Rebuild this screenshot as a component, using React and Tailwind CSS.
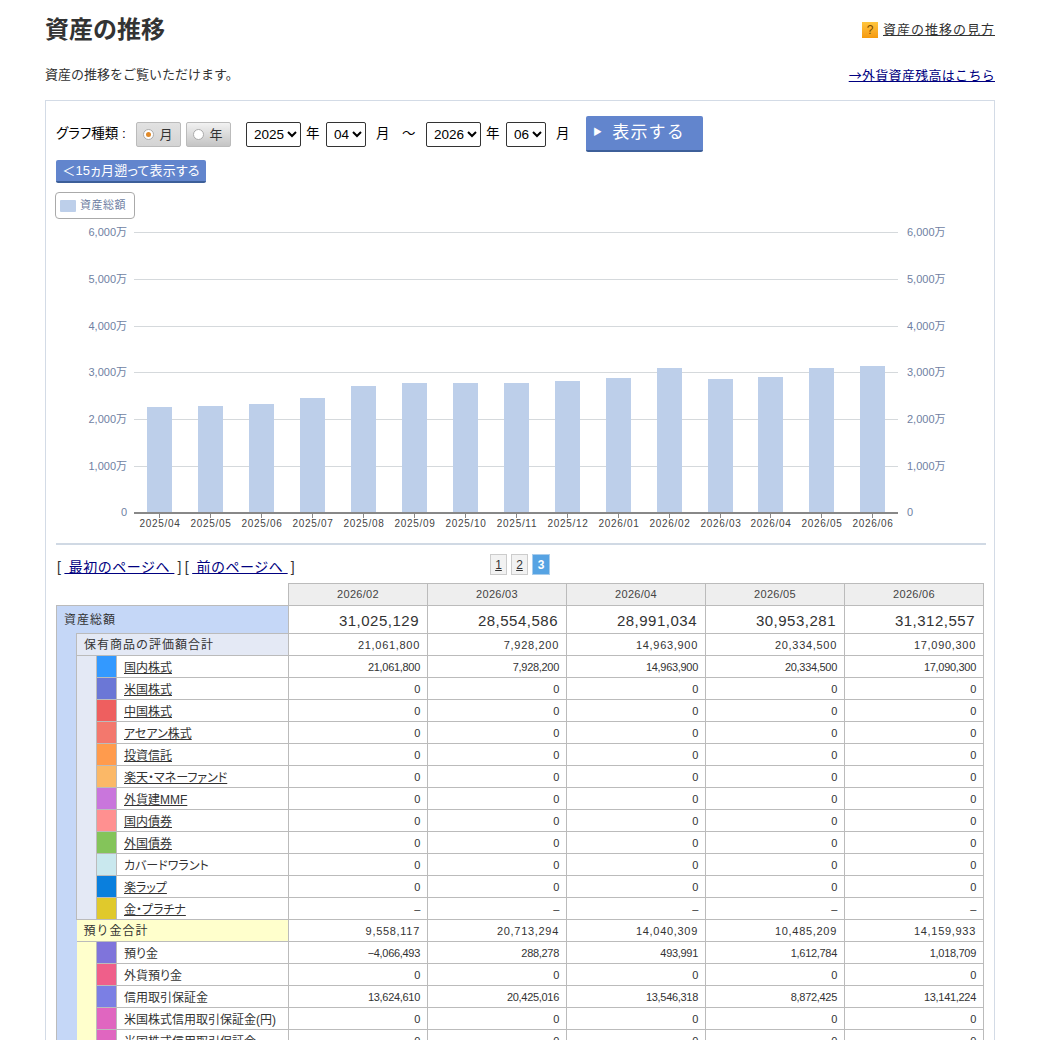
const bars = [
  ['2025/04', 407], ['2025/05', 406], ['2025/06', 404], ['2025/07', 398], ['2025/08', 386],
  ['2025/09', 383], ['2025/10', 383], ['2025/11', 383], ['2025/12', 381], ['2026/01', 378],
  ['2026/02', 368], ['2026/03', 379], ['2026/04', 377], ['2026/05', 368], ['2026/06', 366],
];
const barX = [147, 198, 249, 300, 351, 402, 453, 504, 555, 606, 657, 708, 758, 809, 860];
const grid = [
  ['6,000万', 232], ['5,000万', 279], ['4,000万', 326], ['3,000万', 372],
  ['2,000万', 419], ['1,000万', 466], ['0', 512],
];

const Chart = () => (
  // svg origin is page x=56, y=224
  <svg width="928" height="310" viewBox="56 224 928 310" className="block">
    {grid.slice(0, 6).map(([, y]) => (
      <line key={y} x1="134" x2="898" y1={y + 0.5} y2={y + 0.5} stroke="#d5d9dc" />
    ))}
    {grid.map(([label, y]) => (
      <g key={label} fontSize="11" fill="#6f7fa3" fontFamily="Liberation Sans, Noto Sans CJK JP, sans-serif">
        <text x="127" y={y + 4} textAnchor="end">{label}</text>
        <text x="907" y={y + 4}>{label}</text>
      </g>
    ))}
    {bars.map(([label, top], i) => (
      <g key={label}>
        <rect x={barX[i]} y={top} width="25" height={513 - top} fill="#bdcfea" />
        <line x1={barX[i] + 12.5} x2={barX[i] + 12.5} y1="513" y2="518" stroke="#888888" />
        <text x={barX[i] + 13} y="527" textAnchor="middle" fontSize="10" letterSpacing="0.7" fill="#444444" fontFamily="Liberation Sans, sans-serif">{label}</text>
      </g>
    ))}
    <rect x="134" y="512" width="764" height="2" fill="#888888" />
  </svg>
);

const months = ['2026/02', '2026/03', '2026/04', '2026/05', '2026/06'];

const total = ['31,025,129', '28,554,586', '28,991,034', '30,953,281', '31,312,557'];
const heldTotal = ['21,061,800', '7,928,200', '14,963,900', '20,334,500', '17,090,300'];
const cashTotal = ['9,558,117', '20,713,294', '14,040,309', '10,485,209', '14,159,933'];
const zeros = ['0', '0', '0', '0', '0'];

const held = [
  ['国内株式', '#3399ff', true, heldTotal],
  ['米国株式', '#6b77d6', true, zeros],
  ['中国株式', '#ee5f5f', true, zeros],
  ['アセアン株式', '#f3786d', true, zeros],
  ['投資信託', '#ff9b4d', true, zeros],
  ['楽天・マネーファンド', '#fbb867', true, zeros],
  ['外貨建MMF', '#c976dc', true, zeros],
  ['国内債券', '#ff9090', true, zeros],
  ['外国債券', '#84c45a', true, zeros],
  ['カバードワラント', '#c9e8ee', false, zeros],
  ['楽ラップ', '#0a7fdd', true, zeros],
  ['金・プラチナ', '#e0c92c', true, ['–', '–', '–', '–', '–']],
];

const cash = [
  ['預り金', '#7f74db', ['−4,066,493', '288,278', '493,991', '1,612,784', '1,018,709']],
  ['外貨預り金', '#ef5f8a', zeros],
  ['信用取引保証金', '#7b7fe4', ['13,624,610', '20,425,016', '13,546,318', '8,872,425', '13,141,224']],
  ['米国株式信用取引保証金(円)', '#e066c0', zeros],
  ['米国株式信用取引保証金', '#e066c0', zeros],
];

const NumCells = ({ values, className }) =>
  values.map((v, i) => (
    <td key={i} className={`border border-[#bbbbbb] p-0 pt-[1px] pr-[7px] text-right ${className}`}>{v}</td>
  ));

const DetailRow = ({ label, color, link, values, first }) => (
  <tr className="h-[22px]">
    {first}
    <td className="border border-[#bbbbbb] p-0" style={{ backgroundColor: color }} />
    <td className="border border-[#bbbbbb] p-0 pt-[2px] pl-[7px] text-[12px] text-[#333333] [font-feature-settings:'palt']">
      {link ? <span className="underline">{label}</span> : label}
    </td>
    <NumCells values={values} className="text-[11px] tracking-[-0.3px] text-[#333333]" />
  </tr>
);

const AssetTable = () => (
  <table className="w-[928px] table-fixed border-collapse leading-none">
    <colgroup>
      <col className="w-[20px]" />
      <col className="w-[20px]" />
      <col className="w-[20px]" />
      <col className="w-[172px]" />
      <col className="w-[139px]" />
      <col className="w-[139px]" />
      <col className="w-[139px]" />
      <col className="w-[139px]" />
      <col className="w-[139px]" />
    </colgroup>
    <thead>
      <tr className="h-[22px]">
        <th colSpan={4} className="p-0" />
        {months.map(m => (
          <th key={m} className="border border-[#bbbbbb] bg-[#eeeeee] p-0 text-center text-[11px] font-normal tracking-[0.3px] text-[#444444]">{m}</th>
        ))}
      </tr>
    </thead>
    <tbody>
      <tr className="h-[28px]">
        <td colSpan={4} className="border border-[#bbbbbb] border-b-0 bg-[#c5d7f7] p-0 pl-[7px] text-[12px] tracking-[1px] text-[#333333]">資産総額</td>
        <NumCells values={total} className="pr-[8px] text-[15px] tracking-[0.5px] text-[#333333]" />
      </tr>
      <tr className="h-[22px]">
        <td rowSpan={20} className="border-l border-[#bbbbbb] bg-[#c5d7f7] p-0" />
        <td colSpan={3} className="border border-[#bbbbbb] bg-[#e4e9f5] p-0 pl-[7px] text-[12px] tracking-[1px] text-[#333333]">保有商品の評価額合計</td>
        <NumCells values={heldTotal} className="text-[11px] tracking-[0.7px] text-[#333333]" />
      </tr>
      {held.map(([label, color, link, values], i) => (
        <DetailRow
          key={label}
          label={label}
          color={color}
          link={link}
          values={values}
          first={i === 0 ? <td rowSpan={12} className="border border-[#bbbbbb] bg-[#e4e9f5] p-0" /> : null}
        />
      ))}
      <tr className="h-[22px]">
        <td colSpan={3} className="border-r border-b border-[#bbbbbb] bg-[#ffffcc] p-0 pl-[7px] text-[12px] tracking-[1px] text-[#333333]">預り金合計</td>
        <NumCells values={cashTotal} className="text-[11px] tracking-[0.7px] text-[#333333]" />
      </tr>
      {cash.map(([label, color, values], i) => (
        <DetailRow
          key={label}
          label={label}
          color={color}
          values={values}
          first={i === 0 ? <td rowSpan={5} className="bg-[#ffffcc] p-0" /> : null}
        />
      ))}
    </tbody>
  </table>
);

const Select = ({ value, options, className }) => (
  <select
    defaultValue={value}
    className={`h-[25px] rounded-[2px] border border-[#333333] bg-white pl-[3px] text-[13.5px] text-black ${className}`}
  >
    {options.map(o => <option key={o}>{o}</option>)}
  </select>
);

const Radio = ({ label, on, className }) => (
  <span className={`flex h-[25px] w-[45px] items-center justify-center gap-[5px] rounded-[2px] border border-[#bbbbbb] bg-gradient-to-b pt-[1px] pr-[1px] text-[13px] text-[#333333] ${className}`}>
    <span className="flex h-[11px] w-[11px] items-center justify-center rounded-full border border-[#aaaaaa] bg-white">
      {on && <span className="h-[5px] w-[5px] rounded-full bg-[#e08a2b]" />}
    </span>
    {label}
  </span>
);

export default function App() {
  return (
    <div className="h-[1040px] overflow-hidden bg-white font-['Liberation_Sans','Noto_Sans_CJK_JP',sans-serif] text-[#333333]">
      <div className="ml-[45px] w-[950px] pt-[16px]">
        <div className="flex h-[28px] items-center justify-between">
          <h1 className="text-[24px] font-bold leading-none text-[#333333]">資産の推移</h1>
          <a className="flex items-center gap-[5px] text-[13px] tracking-[1px] text-[#333333]">
            <span className="flex h-[16px] w-[16px] items-center justify-center bg-gradient-to-b from-[#ffc53d] to-[#f59a0c] text-[12px] leading-none tracking-normal text-[#7a4a00]">?</span>
            <span className="underline">資産の推移の見方</span>
          </a>
        </div>
        <div className="mt-[21px] flex h-[20px] items-center justify-between text-[13px] leading-[20px]">
          <p>資産の推移をご覧いただけます。</p>
          <a className="font-['Noto_Sans_CJK_JP',sans-serif] tracking-[0.3px] text-[#000080] underline">→外貨資産残高はこちら</a>
        </div>
        <div className="mt-[15px] h-[1000px] border border-[#d3dbe6] px-[10px]">
          <div className="flex h-[51px] items-center pt-[15px] text-[13.5px] text-black">
            <span className="w-[80px] whitespace-nowrap pt-[1px] [font-feature-settings:'palt']">グラフ種類 :</span>
            <Radio label="月" on className="from-[#e2e2e2] to-[#d4d4d4]" />
            <Radio label="年" className="ml-[5px] from-[#f2f2f2] to-[#c4c4c4]" />
            <Select value="2025" options={['2025', '2026']} className="ml-[15px] w-[55px]" />
            <span className="ml-[5px] w-[20px] pt-[1px]">年</span>
            <Select value="04" options={['04', '06']} className="w-[40px]" />
            <span className="ml-[10px] w-[26px] pt-[1px]">月</span>
            <span className="w-[24px] pt-[1px]">〜</span>
            <Select value="2026" options={['2025', '2026']} className="w-[55px]" />
            <span className="ml-[5px] w-[20px] pt-[1px]">年</span>
            <Select value="06" options={['04', '06']} className="w-[40px]" />
            <span className="ml-[10px] w-[30px] pt-[1px]">月</span>
            <button className="flex h-[36px] w-[117px] items-center rounded-[2px] border-b-2 border-[#3d5f99] bg-[#6285cd] pl-[7px] text-[17px] tracking-[1.2px] text-white">
              <span className="mr-[9px] text-[9px]">▶</span>表示する
            </button>
          </div>
          <button className="mt-[8px] block h-[23px] w-[150px] whitespace-nowrap rounded-[2px] border-b-2 border-[#3d5f99] bg-[#6285cd] text-[13px] tracking-[0.2px] text-white [font-feature-settings:'palt']">＜15ヵ月遡って表示する</button>
          <div className="ml-[-1px] mt-[9px] flex h-[27px] w-[80px] items-center gap-[4px] rounded-[4px] border border-[#aaaaaa] pl-[4px] text-[11px] tracking-[0.5px] text-[#6f7fa3]">
            <span className="h-[12px] w-[16px] rounded-[1px] bg-[#bdcfea]" />
            資産総額
          </div>
          <div className="mt-[5px]">
            <Chart />
          </div>
          <div className="mt-[9px] h-[2px] w-[930px] bg-[#d0d9e4]" />
          <div className="mt-[9px] flex h-[23px] items-start">
            <div className="flex w-[434px] whitespace-pre pt-[4px] pl-[1px] text-[14px] leading-[18px] tracking-[0.5px] text-[#333333]">
              <span>[</span>
              <a className="ml-[3px] text-[#000080] underline">{' 最初のページへ '}</a>
              <span className="ml-[3px]">]</span>
              <span className="ml-[3px]">[</span>
              <a className="ml-[3px] text-[#000080] underline">{' 前のページへ '}</a>
              <span className="ml-[3px]">]</span>
            </div>
            <div className="flex gap-[4px]">
              <span className="flex h-[21px] w-[17px] items-center justify-center border border-[#cccccc] bg-[#f2f2f2] text-[12px] underline">1</span>
              <span className="flex h-[21px] w-[17px] items-center justify-center border border-[#cccccc] bg-[#f2f2f2] text-[12px] underline">2</span>
              <span className="flex h-[21px] w-[18px] items-center justify-center border border-[#a9cdec] bg-[#56a3e3] text-[12px] font-bold text-white">3</span>
            </div>
          </div>
          <div className="mt-[6px]">
            <AssetTable />
          </div>
        </div>
      </div>
    </div>
  );
}
